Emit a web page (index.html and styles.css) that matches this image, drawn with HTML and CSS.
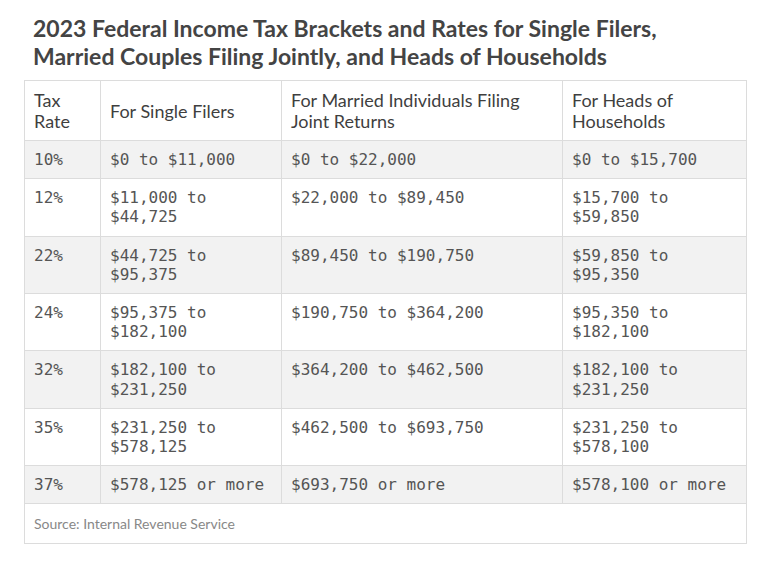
FILE: index.html
```html
<!DOCTYPE html>
<html>
<head>
<meta charset="utf-8">
<link rel="stylesheet" href="styles.css">
</head>
<body>
<div class="wrap">
  <h1 class="title">2023 Federal Income Tax Brackets and Rates for Single Filers, Married Couples Filing Jointly, and Heads of Households</h1>
  <table class="tax">
    <colgroup>
      <col class="c1"><col class="c2"><col class="c3"><col class="c4">
    </colgroup>
    <thead>
      <tr><th>Tax<br>Rate</th><th>For Single Filers</th><th>For Married Individuals Filing Joint Returns</th><th>For Heads of Households</th></tr>
    </thead>
    <tbody>
      <tr class="alt"><td>10%</td><td>$0 to $11,000</td><td>$0 to $22,000</td><td>$0 to $15,700</td></tr>
      <tr><td>12%</td><td>$11,000 to $44,725</td><td>$22,000 to $89,450</td><td>$15,700 to $59,850</td></tr>
      <tr class="alt"><td>22%</td><td>$44,725 to $95,375</td><td>$89,450 to $190,750</td><td>$59,850 to $95,350</td></tr>
      <tr><td>24%</td><td>$95,375 to $182,100</td><td>$190,750 to $364,200</td><td>$95,350 to $182,100</td></tr>
      <tr class="alt"><td>32%</td><td>$182,100 to $231,250</td><td>$364,200 to $462,500</td><td>$182,100 to $231,250</td></tr>
      <tr><td>35%</td><td>$231,250 to $578,125</td><td>$462,500 to $693,750</td><td>$231,250 to $578,100</td></tr>
      <tr class="alt"><td>37%</td><td>$578,125 or more</td><td>$693,750 or more</td><td>$578,100 or more</td></tr>
    </tbody>
    <tfoot>
      <tr><td colspan="4" class="source">Source: Internal Revenue Service</td></tr>
    </tfoot>
  </table>
</div>
</body>
</html>
```

FILE: styles.css
```css
html, body {
  margin: 0;
  padding: 0;
  background: #ffffff;
}
.wrap {
  padding: 14px 0 0 24px;
  width: 723px;
}
.title {
  margin: 0 0 10px 9px;
  max-width: 650px;
  font-family: Lato, "Liberation Sans", sans-serif;
  font-weight: 700;
  font-size: 23px;
  line-height: 28px;
  color: #444444;
}
.tax {
  border-collapse: collapse;
  width: 723px;
  table-layout: fixed;
  border: 1px solid #cfcfcf;
}
.c1 { width: 76px; }
.c2 { width: 181px; }
.c3 { width: 281px; }
.c4 { width: 184px; }
.tax th {
  font-family: Lato, "Liberation Sans", sans-serif;
  font-weight: 400;
  font-size: 18px;
  line-height: 21px;
  color: #3f3f3f;
  text-align: left;
  vertical-align: middle;
  padding: 9px 9px 8px 9px;
  border: 1px solid #dcdcdc;
  height: 42px;
}
.tax td {
  font-family: "DejaVu Sans Mono", "Liberation Mono", monospace;
  font-size: 16px;
  line-height: 19.2px;
  color: #555555;
  text-align: left;
  vertical-align: top;
  padding: 9px 9px 9px 9px;
  border: 1px solid #dcdcdc;
}
.tax tr.alt td {
  background: #f2f2f2;
}
.tax td.source {
  font-family: Lato, "Liberation Sans", sans-serif;
  font-size: 14px;
  line-height: 20px;
  color: #888888;
  padding: 10px 9px 9px 9px;
  background: #ffffff;
}
```
